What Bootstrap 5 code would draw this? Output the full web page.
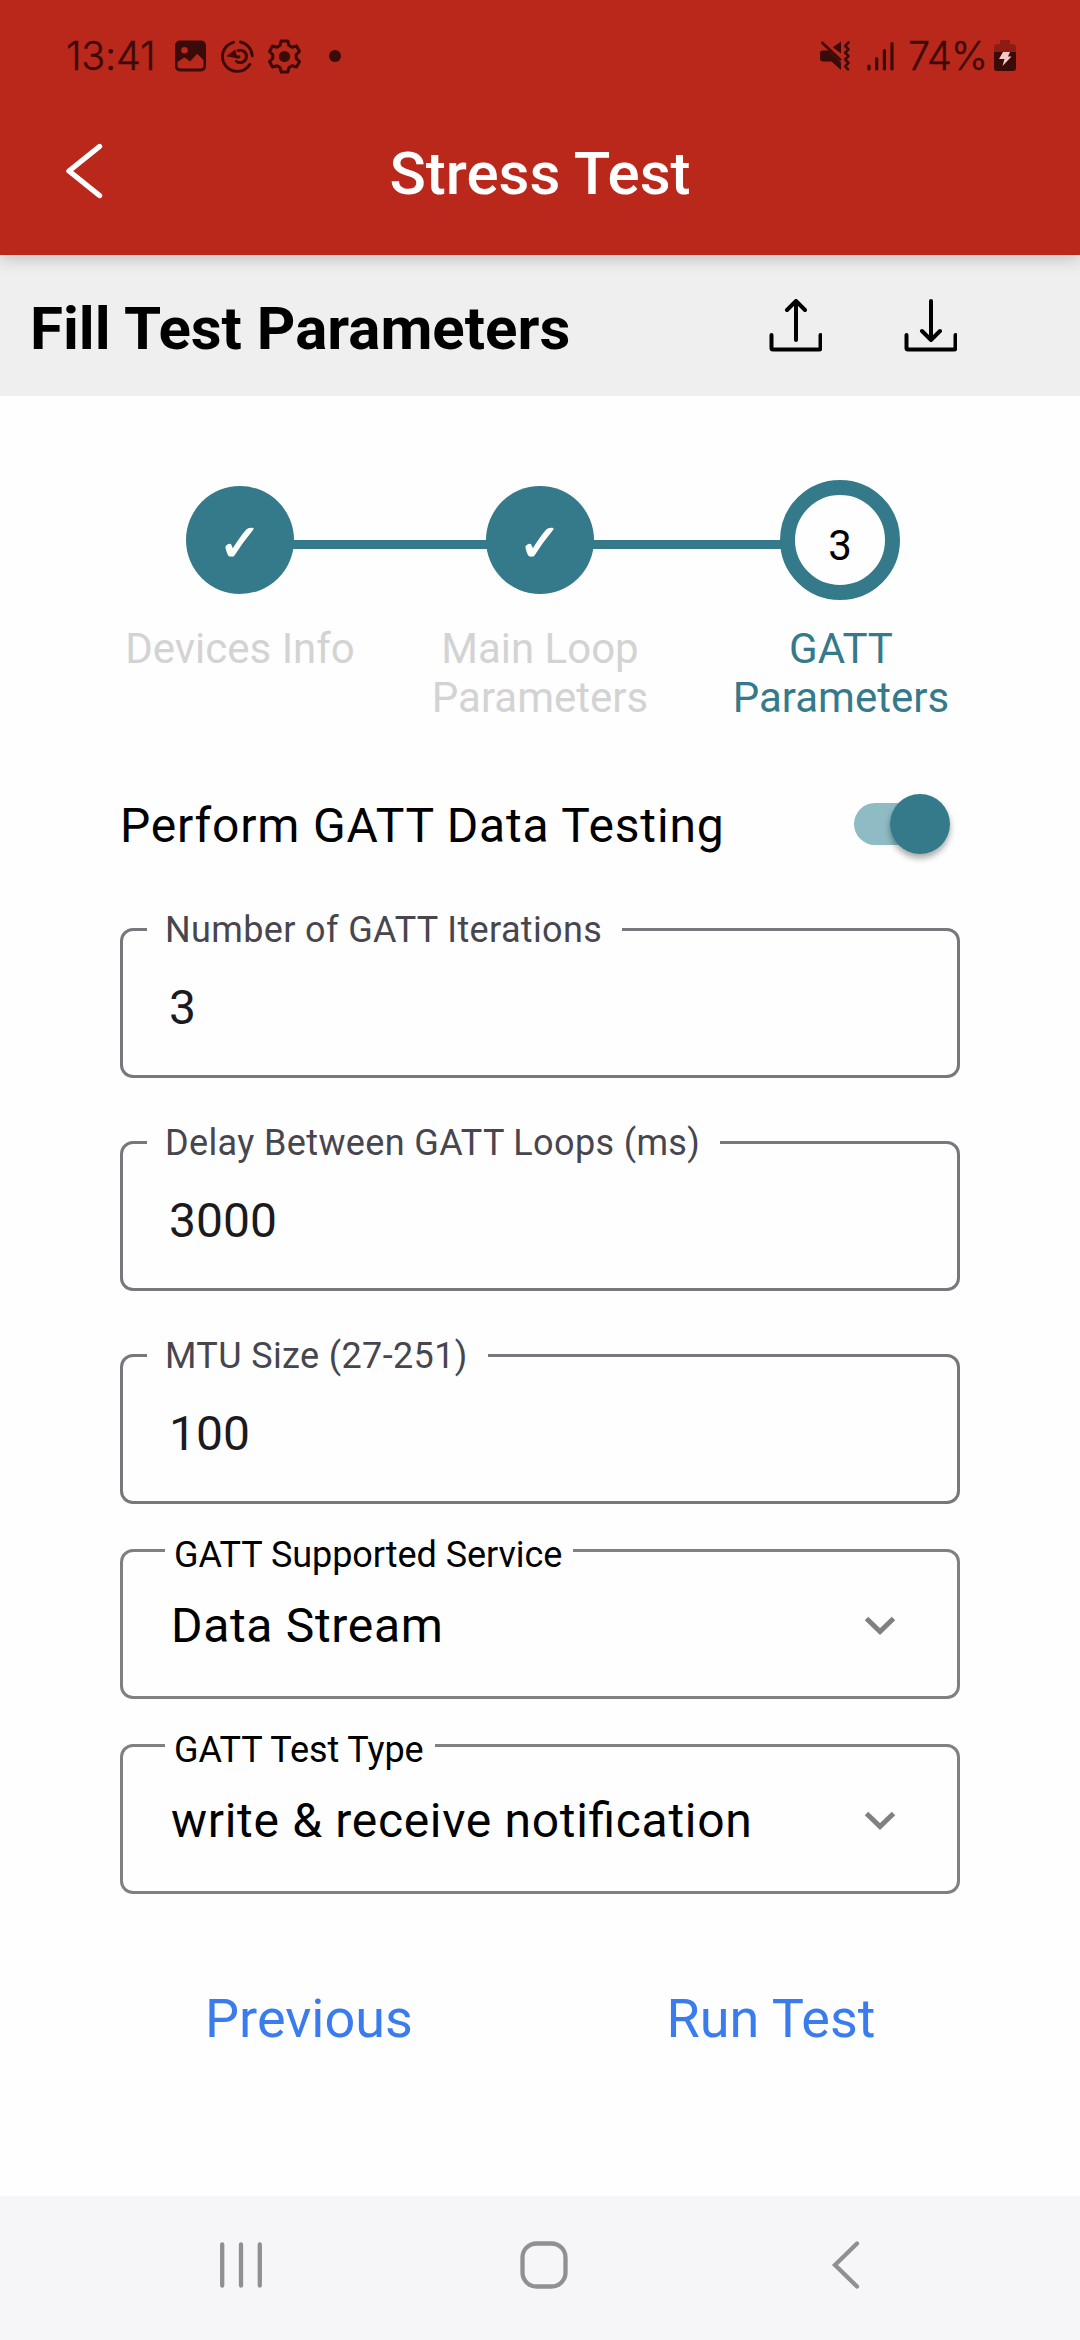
<!DOCTYPE html>
<html lang="en">
<head>
<meta charset="utf-8">
<meta name="viewport" content="width=device-width, initial-scale=1">
<title>Stress Test</title>
<link href="https://cdn.jsdelivr.net/npm/bootstrap@5.3.0/dist/css/bootstrap.min.css" rel="stylesheet">
<style>
  :root { --teal: #357a8a; --brand: #ba271b; --ink: #3a0b08; }
  html, body { height: 100%; }
  body { font-family: Roboto, sans-serif; color: #000; background: #fefefe; overflow: hidden; }
  svg { display: block; flex: none; }
  .screen { width: 1080px; height: 2340px; }
  .app-header { background: var(--brand); height: 255px; box-shadow: 0 3px 16px rgba(0,0,0,.22); z-index: 2; }
  .status { height: 93px; padding: 19px 64px 0 66px; font: 300 39.5px/74px Inter, sans-serif; color: var(--ink); -webkit-text-stroke: .4px var(--ink); }
  .clock { width: 109px; letter-spacing: -.2px; }
  .charge { width: 86px; letter-spacing: -.8px; }
  .app-bar { height: 162px; padding: 0 65px; }
  .app-title { font-size: 60px; font-weight: 500; line-height: 70px; padding-right: 40px; }
  .back-arrow { margin-top: -5px; }
  .sub-bar { background: #efefef; height: 141px; padding: 6px 123px 0 30px; }
  .sub-bar svg { margin-bottom: 6px; }
  .sub-title { font-size: 60px; font-weight: 700; line-height: 70px; }
  .track { padding: 84px 180px 0 186px; }
  .dot { width: 108px; height: 108px; background: var(--teal); color: #fff; font: 52px/49px "DejaVu Sans", sans-serif; padding-top: 7px; z-index: 1; flex: none; }
  .dot-done { -webkit-text-stroke: 1.2px #fff; }
  .dot-now { width: 120px; height: 120px; background: #fefefe; border: 15px solid var(--teal); color: #000; font: 42px/49px Roboto, sans-serif; padding-top: 11px; }
  .bar-line { width: 196px; flex: none; height: 9px; background: var(--teal); margin: 9px -2px 0; }
  .bar-line-end { width: 190px; }
  .labels { margin: 24px 90px 0; font-size: 42px; line-height: 49px; color: #d3d3d3; height: 98px; }
  .labels .now { color: var(--teal); padding-left: 2px; }
  .panel { padding: 72px 120px 0; }
  .toggle-row { height: 60px; margin-bottom: 74px; font-size: 48px; line-height: 56px; letter-spacing: .83px; }
  .field { position: relative; height: 150px; border: 3px solid #79767d; border-radius: 13px; padding: 9px 46px 0; font-size: 48px; line-height: 56px; color: #1b1b1f; }
  .fields { gap: 63px; }
  .field-label { position: absolute; top: -22px; left: 24px; padding: 0 20px 0 18px; background: #fefefe; font-size: 36px; line-height: 43px; color: #47464f; letter-spacing: .37px; }
  .picks { gap: 45px; margin-top: 45px; }
  .pick { border-color: #808080; padding: 3px 61px 0 48px; color: #000; letter-spacing: .68px; font-feature-settings: "liga" 1; }
  .pick .field-label { top: -18px; left: 42px; padding: 0 11px 0 9px; color: #000; letter-spacing: -.06px; }
  .actions { margin: 74px 78px 0; }
  .actions .btn { width: 462px; height: 100px; font-size: 54px; color: #3a7cee; border: 0; line-height: 63px; }
  .sys-nav { height: 144px; background: #f6f6f9; padding: 0 210px 6px 217px; }
  .sys-nav svg:last-child { margin-right: 7px; margin-left: -7px; }
</style>
</head>
<body>
<div class="screen d-flex flex-column">
  <header class="app-header position-relative">
    <div class="status d-flex align-items-center">
      <span class="clock">13:41</span>
      <svg width="31" height="32" viewBox="0 0 31 32"><path fill="#3a0b08" fill-rule="evenodd" d="M5 .5h21a5 5 0 0 1 5 5v21a5 5 0 0 1-5 5H5a5 5 0 0 1-5-5v-21a5 5 0 0 1 5-5ZM9.500 7a3.300 3.300 0 1 0 0 6.600 3.300 3.300 0 0 0 0-6.600ZM2.500 22v3.500a3 3 0 0 0 3 3h20a3 3 0 0 0 3-3V20l-5.500-5.500a1 1 0 0 0-1.500 0L15 21.500 10.500 18a1.500 1.500 0 0 0-2 0Z"/></svg>
      <svg style="margin-left:15px" width="33" height="33" viewBox="0 0 33 33" fill="none" stroke="#3a0b08" stroke-width="2.900" stroke-linecap="round"><path d="M12.500 2.300A14.800 14.800 0 1 0 28.800 24.500"/><path d="M19.500 2A14.800 14.800 0 0 1 31.200 15.800"/><path d="M17 10.600a6.200 6.200 0 1 1-1.500 10.700"/><path d="M18 16.800a3.500 3.500 0 0 1-4.500-3"/><path d="m8.800 15.500 4.500-3.500 1 4.500Z" fill="#3a0b08"/></svg>
      <svg style="margin-left:14px" width="33" height="35" viewBox="0 0 33 35"><path fill="none" stroke="#3a0b08" stroke-width="3" stroke-linejoin="round" d="M13.200 2h6.600l1.200 4.500 3 1.700 4.500-1.200 3 5.500-3.300 3.200v3.600l3.300 3.200-3 5.500-4.500-1.200-3 1.700-1.200 4.500h-6.600L12 28.500l-3-1.700L4.500 28l-3-5.500 3.300-3.200v-3.600l-3.300-3.200 3-5.500L9 8.200l3-1.700Z"/><circle cx="16.500" cy="17.500" r="5.600" fill="#3a0b08"/></svg>
      <svg style="margin-left:28px" width="12" height="12"><circle cx="6" cy="6" r="6" fill="#3a0b08"/></svg>
      <svg class="ms-auto" width="30" height="30" viewBox="0 0 30 30"><path fill="#3a0b08" d="M3 9.500h5.500L21 21.500V29L11.500 20.500H3a3 3 0 0 1-3-3v-5a3 3 0 0 1 3-3ZM21 .5v12L12.800 6.200Z"/><path fill="none" stroke="#3a0b08" stroke-width="2.600" stroke-linecap="round" stroke-linejoin="round" d="M2.500 2 20 18.500M28.500 1.500l-3.300 3.400 3.300 3.400-3.300 3.400 3.300 3.400-3.300 3.400 3.300 3.400-3.300 3.400 2.800 3"/></svg>
      <svg style="margin-left:17px" width="27" height="30" viewBox="0 0 27 30" fill="none" stroke="#3a0b08" stroke-width="3.200" stroke-linecap="round"><path d="M2 25v3M9.700 17.500V28M17.400 9.500V28M25 2.500V28"/></svg>
      <span class="charge" style="margin-left:14px">74%</span>
      <svg width="22" height="32" viewBox="0 0 22 32"><path fill="#8c1c14" d="M6 0h10v4h2.500A3.500 3.500 0 0 1 22 7.500V13H0V7.500A3.500 3.500 0 0 1 3.500 4H6Z"/><path fill="#3a0b08" d="M0 12h22v16a3 3 0 0 1-3 3H3a3 3 0 0 1-3-3Z"/><path fill="#f6c9c4" d="M9 12h7l-2 4.500h3.500L8.500 26l2-7H5Z"/></svg>
    </div>
    <div class="app-bar d-flex align-items-center text-white">
      <svg class="back-arrow" width="40" height="58" viewBox="0 0 40 58" fill="none" stroke="#fff" stroke-width="5.400" stroke-linecap="round" stroke-linejoin="round"><path d="M34.500 3.500 4 28l30.500 24.500"/></svg>
      <h1 class="app-title m-0 flex-grow-1 text-center">Stress Test</h1>
    </div>
  </header>

  <section class="sub-bar d-flex align-items-center">
    <h2 class="sub-title m-0 me-auto">Fill Test Parameters</h2>
    <svg width="54" height="54" viewBox="0 0 54 54" fill="none" stroke="#000" stroke-width="4" stroke-linecap="round" stroke-linejoin="round"><path d="M3.500 36v13q0 1.500 1.500 1.500h46q1.500 0 1.500-1.500V36M28 41V2M19 11l9-9 9 9"/></svg>
    <svg style="margin-left:81px" width="54" height="54" viewBox="0 0 54 54" fill="none" stroke="#000" stroke-width="4" stroke-linecap="round" stroke-linejoin="round"><path d="M3.500 36v13q0 1.500 1.500 1.500h46q1.500 0 1.500-1.500V36M28 2v39M19 32l9 9 9-9"/></svg>
  </section>

  <main class="flex-grow-1">
    <div class="track d-flex align-items-center">
      <div class="dot dot-done rounded-circle d-flex align-items-center justify-content-center">✓</div>
      <div class="bar-line"></div>
      <div class="dot dot-done rounded-circle d-flex align-items-center justify-content-center">✓</div>
      <div class="bar-line bar-line-end"></div>
      <div class="dot dot-now rounded-circle d-flex align-items-center justify-content-center">3</div>
    </div>
    <div class="labels d-flex text-center">
      <div class="col-4">Devices Info</div>
      <div class="col-4">Main Loop<br>Parameters</div>
      <div class="col-4 now">GATT<br>Parameters</div>
    </div>

    <div class="panel">
      <div class="toggle-row d-flex align-items-center justify-content-between">
        <span style="padding-top:3px">Perform GATT Data Testing</span>
        <svg width="108" height="60" viewBox="0 0 108 60" overflow="visible"><defs><filter id="lift" x="-30%" y="-30%" width="160%" height="170%"><feDropShadow dx="0" dy="4" stdDeviation="3" flood-opacity=".35"/></filter></defs><rect x="2" y="9" width="84" height="42" rx="21" fill="#8ebbc4"/><circle cx="68" cy="30" r="30" fill="#357a8a" filter="url(#lift)"/></svg>
      </div>

      <div class="fields d-flex flex-column">
        <div class="field d-flex align-items-center"><span class="field-label">Number of GATT Iterations</span>3</div>
        <div class="field d-flex align-items-center"><span class="field-label">Delay Between GATT Loops (ms)</span>3000</div>
        <div class="field d-flex align-items-center"><span class="field-label">MTU Size (27-251)</span>100</div>
      </div>

      <div class="picks d-flex flex-column">
        <div class="field pick d-flex align-items-center justify-content-between"><span class="field-label">GATT Supported Service</span><span>Data Stream</span>
          <svg width="32" height="20" viewBox="0 0 32 20" fill="none" stroke="#808080" stroke-width="5"><path d="m2.500 2.500 13.500 13 13.500-13"/></svg></div>
        <div class="field pick d-flex align-items-center justify-content-between"><span class="field-label">GATT Test Type</span><span>write &amp; receive notification</span>
          <svg width="32" height="20" viewBox="0 0 32 20" fill="none" stroke="#808080" stroke-width="5"><path d="m2.500 2.500 13.500 13 13.500-13"/></svg></div>
      </div>
    </div>

    <div class="actions d-flex">
      <button class="btn" type="button">Previous</button>
      <button class="btn" type="button">Run Test</button>
    </div>
  </main>

  <nav class="sys-nav d-flex align-items-center justify-content-between">
    <svg width="48" height="48" viewBox="0 0 48 48" fill="none" stroke="#909090" stroke-width="4.300" stroke-linecap="round"><path d="M5.200 3.500v41M24 3.500v41M42.800 3.500v41"/></svg>
    <svg width="48" height="48" viewBox="0 0 48 48" fill="none" stroke="#909090" stroke-width="4.300"><rect x="2.500" y="2.500" width="43" height="43" rx="14"/></svg>
    <svg width="48" height="48" viewBox="0 0 48 48" fill="none" stroke="#909090" stroke-width="4.300" stroke-linecap="round"><path d="M42 2.500 20 24l22 21.500"/></svg>
  </nav>
</div>
<script src="https://cdn.jsdelivr.net/npm/bootstrap@5.3.0/dist/js/bootstrap.bundle.min.js"></script>
</body>
</html>
